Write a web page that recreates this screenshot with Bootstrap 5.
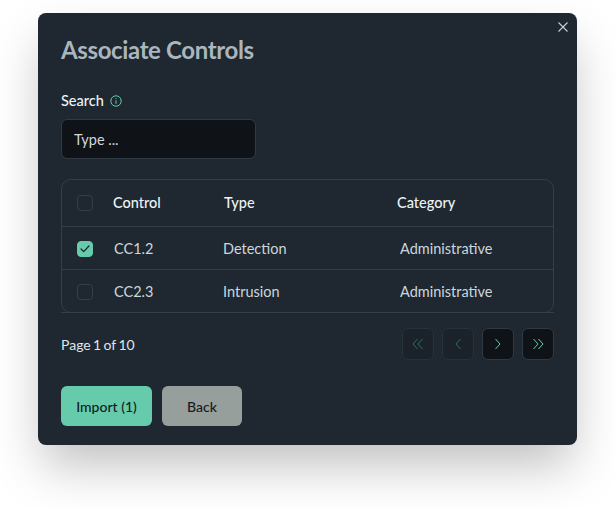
<!DOCTYPE html>
<html lang="en">

<head>
    <meta charset="UTF-8">
    <title>Associate Controls</title>
    <link rel="stylesheet" href="https://cdn.jsdelivr.net/npm/bootstrap@5.3.3/dist/css/bootstrap.min.css">
    <style>
        body {
            background-color: #fff;
            font-family: "Lato", "Noto Sans", sans-serif;
            padding: 13px 38px 0;
            min-height: 508px;
        }

        .dialog-box {
            position: relative;
            width: 539px;
            height: 432px;
            padding: 20px 23px;
            background-color: #1f2730;
            border-radius: 8px;
            box-shadow: 0 25px 50px -5px rgba(0, 0, 0, .25);
        }

        .dialog-close {
            position: absolute;
            top: 7px;
            right: 7px;
            padding: 0;
            line-height: 0;
            background: none;
            border: 0;
        }

        .dialog-title {
            margin: 0 0 24px;
            font-size: 24px;
            line-height: 34px;
            font-weight: 700;
            color: #a9b6bd;
            letter-spacing: -.37px;
        }

        .search-label {
            height: 20px;
            margin-bottom: 8px;
            gap: 6px;
            font-size: 14.5px;
            font-weight: 500;
            color: #eef3f4;
        }

        .search-input.form-control {
            width: 195px;
            height: 40px;
            padding: 0 12px;
            font-size: 14.5px;
            color: #cfd8dc;
            background-color: #0f1317;
            border-color: #2f3a44;
            border-radius: 6px;
        }

        .search-input.form-control::placeholder {
            color: #cfd8dc;
            opacity: 1;
        }

        .controls-box {
            position: relative;
            margin-top: 20px;
            height: 134px;
            border: 1px solid #333f4a;
            border-radius: 10px;
        }

        /* bottom line runs straight past the rounded corners */
        .controls-box::after {
            content: "";
            position: absolute;
            left: -1px;
            right: -1px;
            bottom: -1px;
            height: 1px;
            background-color: #333f4a;
        }

        .controls-head,
        .controls-row {
            display: grid;
            align-items: center;
            padding-left: 15px;
        }

        .controls-head {
            grid-template-columns: 36px 111px 173px 1fr;
            height: 46px;
            font-size: 14.5px;
            font-weight: 500;
            color: #eef3f4;
        }

        .controls-row {
            grid-template-columns: 37px 109px 177px 1fr;
            height: 43px;
            padding-top: 1px;
            font-size: 14.5px;
            color: #cbd7dc;
            border-top: 1px solid #333f4a;
        }

        .tick.form-check-input {
            width: 16px;
            height: 16px;
            margin: 0;
            background-color: transparent;
            border-color: #333f4a;
            border-radius: 4px;
        }

        .tick.form-check-input:checked {
            background-color: #65cbab;
            border-color: #65cbab;
            background-image: url("data:image/svg+xml,%3csvg xmlns='http://www.w3.org/2000/svg' viewBox='0 0 16 16'%3e%3cpath fill='none' stroke='%231f2730' stroke-linecap='round' stroke-linejoin='round' stroke-width='1.5' d='M3.5 8l3 3L12.5 4.5'/%3e%3c/svg%3e");
        }

        .pager-row {
            margin-top: 15px;
            height: 32px;
            font-size: 14px;
            color: #dfe6e9;
        }

        .pager-text {
            word-spacing: -1.2px;
        }

        .pager-btn {
            display: flex;
            align-items: center;
            justify-content: center;
            width: 32px;
            height: 32px;
            padding: 0;
            color: #65cbab;
            background-color: #0f1317;
            border: 1px solid #2f3a44;
            border-radius: 6px;
        }

        .pager-btn:disabled {
            color: #2f6d5f;
            background-color: #1b2229;
            border-color: #27313a;
        }

        .action-row {
            margin-top: 26px;
            gap: 10px;
        }

        .action-btn.btn {
            height: 40px;
            padding: 0;
            font-size: 14px;
            font-weight: 500;
            color: #141b21;
            border: 0;
            border-radius: 6px;
        }

        .action-import.btn {
            width: 91px;
            background-color: #65cbab;
        }

        .action-back.btn {
            width: 80px;
            background-color: #969f9c;
        }
    </style>
</head>

<body>
    <div class="dialog-box">
        <button class="dialog-close" aria-label="Close">
            <svg width="14" height="14" viewBox="0 0 14 14" fill="none" stroke="#c7d2d8" stroke-width="1.1">
                <path d="M2.5 2.5l9 9M11.5 2.5l-9 9" />
            </svg>
        </button>

        <h2 class="dialog-title">Associate Controls</h2>

        <div class="search-label d-flex align-items-center">
            <span>Search</span>
            <svg width="12" height="12" viewBox="0 0 12 12" fill="none" stroke="#65cbab" stroke-width="1">
                <circle cx="6" cy="6" r="5.2" />
                <path d="M6 3v1M6 5.2v3.6" />
            </svg>
        </div>
        <input class="search-input form-control" type="text" placeholder="Type ...">

        <div class="controls-box">
            <div class="controls-head">
                <input class="tick form-check-input" type="checkbox">
                <span>Control</span>
                <span>Type</span>
                <span>Category</span>
            </div>
            <div class="controls-row">
                <input class="tick form-check-input" type="checkbox" checked>
                <span>CC1.2</span>
                <span>Detection</span>
                <span>Administrative</span>
            </div>
            <div class="controls-row">
                <input class="tick form-check-input" type="checkbox">
                <span>CC2.3</span>
                <span>Intrusion</span>
                <span>Administrative</span>
            </div>
        </div>

        <div class="pager-row d-flex align-items-center justify-content-between">
            <span class="pager-text">Page 1 of 10</span>
            <div class="d-flex gap-2">
                <button class="pager-btn" disabled aria-label="First">
                    <svg width="12" height="12" viewBox="0 0 12 12" fill="none" stroke="currentColor"><path d="M5.5 1L1 6l4.5 5M10.5 1L6 6l4.5 5" /></svg>
                </button>
                <button class="pager-btn" disabled aria-label="Previous">
                    <svg width="12" height="12" viewBox="0 0 12 12" fill="none" stroke="currentColor"><path d="M8.5 1L4 6l4.5 5" /></svg>
                </button>
                <button class="pager-btn" aria-label="Next">
                    <svg width="12" height="12" viewBox="0 0 12 12" fill="none" stroke="currentColor"><path d="M3.5 1L8 6l-4.5 5" /></svg>
                </button>
                <button class="pager-btn" aria-label="Last">
                    <svg width="12" height="12" viewBox="0 0 12 12" fill="none" stroke="currentColor"><path d="M1.5 1L6 6l-4.5 5M6.5 1L11 6l-4.5 5" /></svg>
                </button>
            </div>
        </div>

        <div class="action-row d-flex">
            <button class="action-btn action-import btn">Import (1)</button>
            <button class="action-btn action-back btn">Back</button>
        </div>
    </div>
</body>

</html>
